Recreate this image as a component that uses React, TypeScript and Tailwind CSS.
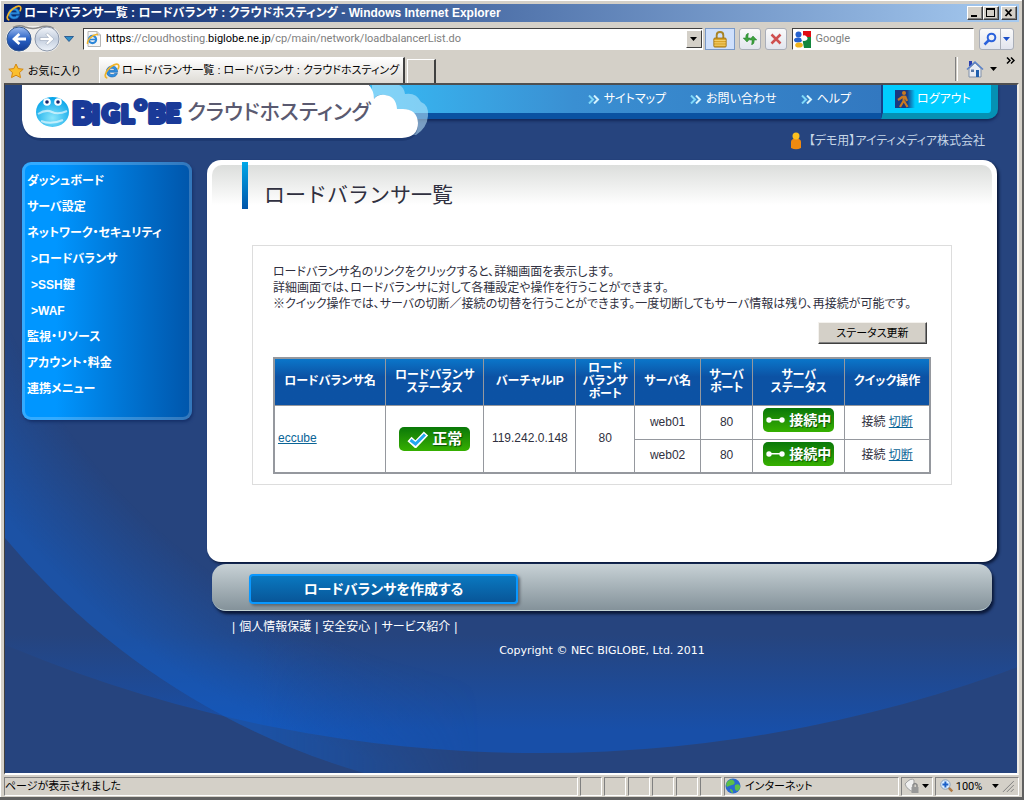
import { ReactNode } from "react";
import { clsx } from "clsx";

type IconProps = { className?: string };

const menuItems = [
  { label: "ダッシュボード" },
  { label: "サーバ設定" },
  { label: "ネットワーク・セキュリティ" },
  { label: ">ロードバランサ", nested: true },
  { label: ">SSH鍵", nested: true },
  { label: ">WAF", nested: true },
  { label: "監視・リソース" },
  { label: "アカウント・料金" },
  { label: "連携メニュー" },
];

const columns = [
  { lines: ["ロードバランサ名"], width: "w-[17%]" },
  { lines: ["ロードバランサ", "ステータス"], width: "w-[15%]" },
  { lines: ["バーチャルIP"], width: "w-[14%]" },
  { lines: ["ロード", "バランサ", "ポート"], width: "w-[9%]" },
  { lines: ["サーバ名"], width: "w-[10%]" },
  { lines: ["サーバ", "ポート"], width: "w-[8%]" },
  { lines: ["サーバ", "ステータス"], width: "w-[14%]" },
  { lines: ["クイック操作"], width: "w-[13%]" },
];

const servers = [
  { name: "web01", port: 80 },
  { name: "web02", port: 80 },
];

function IeIcon({ className }: IconProps) {
  return (
    <svg viewBox="0 0 16 16" className={className} aria-hidden="true">
      <path
        d="M13.6 9.2H5.2c.2 1.6 1.4 2.4 2.9 2.4 1.1 0 2-.4 2.5-1.2h2.8c-.8 2.2-2.8 3.6-5.4 3.6C4.700 14 2.400 11.700 2.400 8.500S4.800 3 8.100 3c3.500 0 5.700 2.500 5.500 6.200ZM5.300 7.300h5.300C10.400 6 9.400 5.300 8 5.300S5.600 6 5.300 7.300Z"
        fill="#2f8fe0"
        stroke="#1461b0"
        strokeWidth=".6"
      />
      <path
        d="M2.600 14.800C.2 13.800 1.200 9.500 4.600 5.800 8 2.200 12.600.3 14.200 1.700c.9.800.7 2.300 0 3.900"
        fill="none"
        stroke="#f0b429"
        strokeWidth="1.700"
        strokeLinecap="round"
      />
    </svg>
  );
}

function Arrow({ className }: IconProps) {
  return (
    <svg viewBox="0 0 8 4" className={clsx("h-1 w-2", className)} aria-hidden="true">
      <path d="M0 0h7L3.500 4Z" fill="currentColor" />
    </svg>
  );
}

function TitleBar() {
  const button =
    "flex h-[14px] w-4 items-center justify-center border border-t-white border-l-white border-r-[#404040] border-b-[#404040] bg-[#d4d0c8] shadow-[inset_-1px_-1px_0_#808080]";
  return (
    <div className="flex h-[18px] items-center bg-linear-to-r from-[#0a246a] to-[#a6caf0] pr-0.5 pl-0.5">
      <IeIcon className="h-4 w-4" />
      <h1 className="ml-0.5 flex-1 truncate text-[12px] leading-[18px] font-bold text-white">
        ロードバランサ一覧 : ロードバランサ : クラウドホスティング - Windows Internet Explorer
      </h1>
      <button type="button" aria-label="最小化" className={button}>
        <svg viewBox="0 0 12 10" className="h-[10px] w-3">
          <path d="M2 7h6v2H2z" />
        </svg>
      </button>
      <button type="button" aria-label="最大化" className={button}>
        <svg viewBox="0 0 12 10" className="h-[10px] w-3">
          <path d="M1 0h9v9H1zM2 2v6h7V2z" fillRule="evenodd" />
        </svg>
      </button>
      <button type="button" aria-label="閉じる" className={clsx(button, "ml-0.5")}>
        <svg viewBox="0 0 12 10" className="h-[10px] w-3">
          <path d="M2.500 1.500l6 6.500m0-6.500l-6 6.500" stroke="#000" strokeWidth="1.800" />
        </svg>
      </button>
    </div>
  );
}

function NavButtons() {
  return (
    <div className="flex items-center">
      <svg viewBox="0 0 56 28" className="h-7 w-14" role="img" aria-label="戻る / 進む">
        <defs>
          <linearGradient id="back" x1="0" y1="0" x2="0" y2="1">
            <stop offset="0" stopColor="#9dbcf0" />
            <stop offset=".5" stopColor="#2a62c4" />
            <stop offset="1" stopColor="#123a94" />
          </linearGradient>
          <linearGradient id="forward" x1="0" y1="0" x2="0" y2="1">
            <stop offset="0" stopColor="#f2f5fa" />
            <stop offset=".5" stopColor="#c3cede" />
            <stop offset="1" stopColor="#eef3fa" />
          </linearGradient>
        </defs>
        <rect x="1" y="1" width="54" height="26" rx="13" fill="#efeeec" />
        <path d="M8 2.500Q14-.5 20 2q7 2.500 14 .5 9-3 15 1" fill="none" stroke="#8a8a8a" strokeWidth="1.500" />
        <circle cx="14" cy="14" r="12" fill="url(#back)" stroke="#34598f" />
        <path d="M7 14l6.500-6 1.800 1.900-2.800 2.600H21v3h-8.500l2.800 2.600-1.800 1.900Z" fill="#fff" />
        <circle cx="42" cy="14" r="12" fill="url(#forward)" stroke="#8e99ab" />
        <path
          d="M49 14l-6.500-6-1.800 1.900 2.800 2.600H35v3h8.500l-2.800 2.600 1.800 1.900Z"
          fill="#fff"
          stroke="#a5b0c2"
          strokeWidth=".7"
        />
      </svg>
      <button type="button" aria-label="履歴" className="ml-0.5 flex h-5 w-3 items-center justify-center">
        <svg viewBox="0 0 10 6" className="h-[6px] w-[10px]">
          <path d="M.5.5h9L5 5.500Z" fill="#2f8fc8" stroke="#1a4a86" strokeWidth=".8" />
        </svg>
      </button>
    </div>
  );
}

function ToolButton({ label, children }: { label: string; children: ReactNode }) {
  return (
    <button
      type="button"
      aria-label={label}
      className="flex h-[22px] w-[22px] items-center justify-center rounded-[3px] border border-[#a9aeb8] bg-linear-to-b from-[#fafafa] via-[#eef0f4] to-[#e2e5ee]"
    >
      {children}
    </button>
  );
}

function AddressBar() {
  return (
    <div className="flex items-center pr-[5px] pl-px">
      <NavButtons />
      <div className="ml-2 flex h-[22px] min-w-0 flex-1 items-center border border-t-[#404040] border-l-[#404040] border-r-white border-b-white bg-white pl-0.5">
        <svg viewBox="0 0 16 16" className="h-4 w-4 shrink-0" aria-hidden="true">
          <path d="M2 .5h9l3.500 3.500v11.500H2Z" fill="#f6f6f6" stroke="#b5b5b5" />
          <path d="M11 .5v3.500h3.500" fill="#ddd" stroke="#b5b5b5" />
          <circle cx="6.500" cy="8.500" r="3.600" fill="none" stroke="#2b86d9" strokeWidth="2.200" />
          <path d="M4 8.500h6" stroke="#2b86d9" strokeWidth="1.600" />
          <path d="M1.500 13C1 9 7 2.500 12 3.500" fill="none" stroke="#f0b429" strokeWidth="1.500" />
        </svg>
        <div
          role="textbox"
          aria-label="アドレス"
          tabIndex={0}
          className="ml-1 min-w-0 flex-1 truncate font-[Roboto,sans-serif] text-[11px] text-[#808080]"
        >
          <span className="text-black">https</span>://cloudhosting.
          <span className="text-black">biglobe.ne.jp</span>
          /cp/main/network/loadbalancerList.do
        </div>
        <button
          type="button"
          aria-label="アドレスの一覧"
          className="flex h-[18px] w-4 items-center justify-center border border-t-white border-l-white border-r-[#404040] border-b-[#404040] bg-[#d4d0c8]"
        >
          <Arrow className="text-black" />
        </button>
      </div>
      <button
        type="button"
        aria-label="セキュリティ"
        className="ml-0.5 flex h-[22px] w-[30px] items-center justify-center border border-[#7a9ac8] bg-[#cfe0fc]"
      >
        <svg viewBox="0 0 14 18" className="h-[17px] w-[14px]">
          <path d="M3.500 8V4.500C3.500 0 10.500 0 10.500 4.500V8" fill="none" stroke="#a88428" strokeWidth="2" />
          <rect x=".5" y="7.500" width="13" height="9.500" rx="1" fill="#dba52a" stroke="#a07414" />
          <path d="M1 10h12M1 12.500h12M1 15h12" stroke="#f5d476" />
        </svg>
      </button>
      <div className="ml-1 flex gap-1">
        <ToolButton label="最新の情報に更新">
          <svg viewBox="0 0 16 14" className="h-[14px] w-4" fill="#3fa33c" stroke="#1f7a2a" strokeWidth=".5">
            <path d="M6.500 1.500C4 1.500 3.800 3.500 3.800 6H1.200L5 10l3.600-4H6c0-2 0-3 .5-4.500Z" />
            <path d="M9.500 12.500c2.500 0 2.700-2 2.700-4.500h2.600L11 4 7.400 8H10c0 2 0 3-.5 4.500Z" />
          </svg>
        </ToolButton>
        <ToolButton label="中止">
          <svg viewBox="0 0 12 12" className="h-3 w-3">
            <path d="M1.500 1.500l9 9m0-9l-9 9" stroke="#cf5050" strokeWidth="2.500" />
          </svg>
        </ToolButton>
      </div>
      <label className="ml-[5px] flex h-[22px] w-[18%] items-center border border-t-[#404040] border-l-[#404040] border-r-white border-b-white bg-white pl-px">
        <svg viewBox="0 0 17 17" className="h-[17px] w-[17px] shrink-0" aria-hidden="true">
          <path d="M0 0h17v17H0Z" fill="#fff" />
          <path d="M9 0h8v6H9Z" fill="#e00b12" />
          <path d="M8 6h9v11h-7Z" fill="#13863c" />
          <circle cx="4.500" cy="3.500" r="3" fill="#2461cf" />
          <ellipse cx="4" cy="9" rx="4" ry="2.500" fill="#2461cf" />
          <ellipse cx="5" cy="14" rx="3.800" ry="2.600" fill="#efb21d" />
          <path d="M8 5q3-2 5 1t-3 4q-4 0-2-5" fill="#fff" />
        </svg>
        <input
          type="search"
          aria-label="検索"
          placeholder="Google"
          className="ml-1 w-full min-w-0 bg-transparent font-[Roboto,sans-serif] text-[11px] outline-none placeholder:text-[#808080]"
        />
      </label>
      <div className="ml-[5px] flex h-[22px] rounded-[3px] border border-[#a9aeb8] bg-linear-to-b from-[#fafafa] to-[#e2e5ee]">
        <button type="button" aria-label="検索する" className="flex w-5 items-center justify-center">
          <svg viewBox="0 0 14 14" className="h-[14px] w-[14px]" fill="none" stroke="#2b62dc">
            <circle cx="8.500" cy="5.500" r="3.800" strokeWidth="2" />
            <path d="M5.500 8.500L1.500 12.500" strokeWidth="2.500" />
          </svg>
        </button>
        <button
          type="button"
          aria-label="検索オプション"
          className="flex w-[13px] items-center justify-center border-l border-[#a9aeb8]"
        >
          <Arrow className="text-[#1c50c8]" />
        </button>
      </div>
    </div>
  );
}

function TabBar() {
  return (
    <div className="flex h-[27px] items-end pr-1 pl-1">
      <button type="button" className="mb-1 flex w-[91px] items-center gap-1 text-[11px]">
        <svg viewBox="0 0 16 16" className="h-4 w-4" aria-hidden="true">
          <path
            d="M8 1l2.200 4.600 5 .6-3.700 3.400 1 5L8 12.200 3.500 14.600l1-5L.8 6.200l5-.6Z"
            fill="#fbbf2d"
            stroke="#d4860f"
            strokeLinejoin="round"
          />
        </svg>
        お気に入り
      </button>
      <button
        type="button"
        className="flex h-[26px] items-center gap-0.5 border-t border-r-2 border-l border-t-white border-r-[#404040] border-l-white bg-linear-to-b from-white to-[#dedbd5] px-1 text-[11px] whitespace-nowrap"
      >
        <IeIcon className="h-4 w-4" />
        ロードバランサ一覧 : ロードバランサ : クラウドホスティング
      </button>
      <button
        type="button"
        aria-label="新しいタブ"
        className="ml-0.5 h-6 w-[29px] border-t border-r-2 border-l border-t-white border-r-[#404040] border-l-white"
      />
      <div className="ml-auto flex h-[26px] items-start">
        <span className="h-6 w-[3px] border-r border-l border-r-white border-l-[#808080]" />
        <button type="button" aria-label="ホーム" className="mt-[3px] ml-2 flex items-center gap-1.5">
          <svg viewBox="0 0 18 18" className="h-[18px] w-[18px]">
            <path d="M3 1h3v5H3Z" fill="#2a3fb0" />
            <path d="M3 8.500L9 3l6 5.500V17H3Z" fill="#e8ecf4" stroke="#8090a8" />
            <path d="M1 9.500L9 2l8 7.500" fill="none" stroke="#5b82c8" strokeWidth="1.600" />
            <path d="M5 9.500h3V12H5Z" fill="#5878a8" />
            <path d="M10 10h3v7h-3Z" fill="#1f5fae" />
          </svg>
          <Arrow className="text-black" />
        </button>
        <button type="button" aria-label="その他" className="ml-2">
          <svg viewBox="0 0 9 7" className="h-[7px] w-[9px]" fill="none" stroke="#000" strokeWidth="1.500">
            <path d="M1 .5l3 3-3 3M5 .5l3 3-3 3" />
          </svg>
        </button>
      </div>
    </div>
  );
}

function Backdrop() {
  return (
    <svg
      viewBox="5 84 1013 690"
      preserveAspectRatio="none"
      className="absolute inset-0 h-full w-full"
      aria-hidden="true"
    >
      <defs>
        <linearGradient id="bowl" gradientUnits="userSpaceOnUse" x1="0" y1="635" x2="0" y2="730">
          <stop offset="0" stopColor="#184fa8" stopOpacity="0" />
          <stop offset="1" stopColor="#184fa8" />
        </linearGradient>
        <radialGradient id="sweep" gradientUnits="userSpaceOnUse" cx="568" cy="72" r="731">
          <stop offset=".84" stopColor="#1260cc" stopOpacity="0" />
          <stop offset=".98" stopColor="#1260cc" stopOpacity=".5" />
        </radialGradient>
        <linearGradient id="fade" gradientUnits="userSpaceOnUse" x1="260" y1="0" x2="480" y2="0">
          <stop offset="0" stopColor="#fff" />
          <stop offset="1" stopColor="#000" />
        </linearGradient>
        <mask id="left" maskUnits="userSpaceOnUse" x="0" y="84" width="1020" height="700">
          <rect x="0" y="84" width="1020" height="700" fill="url(#fade)" />
        </mask>
      </defs>
      <circle cx="540" cy="-617" r="1371" fill="url(#bowl)" />
      <circle cx="568" cy="72" r="731" fill="url(#sweep)" mask="url(#left)" />
    </svg>
  );
}

function Logo() {
  return (
    <div className="relative z-10 h-[58px] w-[408px] shrink-0">
      <svg viewBox="0 0 408 58" className="absolute inset-0 h-full w-full" aria-hidden="true">
        <path d="M350 0h27q5 2 6 9 11-2 16 8 8 3 7 14-1 12-12 19H350Z" fill="#bfe9fb" fillOpacity=".55" />
        <path
          d="M0 2V37q2 18 20 19H380q16-1 16-17-1-14-15-15h-7q-1-14-12-14-7-1-10 4-2-10-6-14H0Z"
          fill="#10295c"
          fillOpacity=".35"
        />
        <path d="M0 0V35q2 18 20 18H380q16-1 16-15-1-14-15-14h-6q-1-13-12-14-7-1-11 4 0-8-5-14Z" fill="#fff" />
      </svg>
      <div className="relative flex h-[54px] items-center pl-[13px]">
        <svg viewBox="0 0 148 40" className="h-10 w-[148px]" role="img" aria-label="BIGLOBE">
          <defs>
            <radialGradient id="globe" cx=".5" cy=".7" r=".65">
              <stop offset="0" stopColor="#8be6fb" />
              <stop offset="1" stopColor="#0aa6ea" />
            </radialGradient>
          </defs>
          <ellipse cx="17.500" cy="20" rx="16.500" ry="15" fill="url(#globe)" />
          <path d="M3 22q8-5 14-2t15-1M6 29q10 4 22-1" fill="none" stroke="#fff" strokeOpacity=".6" strokeWidth="2" />
          <g fill="#fff">
            <circle cx="12" cy="10" r="3.800" />
            <circle cx="23" cy="10" r="3.800" />
          </g>
          <g fill="#16246c">
            <circle cx="12" cy="10" r="1.800" />
            <circle cx="23" cy="10" r="1.800" />
          </g>
          <g
            fill="#1a3a98"
            stroke="#1a3a98"
            strokeWidth="4"
            strokeLinejoin="round"
            fontFamily="Lato, sans-serif"
            fontWeight="900"
          >
            <text x="37" y="32" fontSize="31">B</text>
            <text x="57" y="32" fontSize="26">I</text>
            <text x="67" y="30" fontSize="24">G</text>
            <text x="86" y="31" fontSize="25">L</text>
            <text x="100" y="18" fontSize="14">O</text>
            <text x="113" y="31" fontSize="27">B</text>
            <text x="131" y="30" fontSize="25">E</text>
          </g>
        </svg>
        <span className="ml-1 text-[21px] font-medium whitespace-nowrap text-[#5a5a70]">クラウドホスティング</span>
      </div>
    </div>
  );
}

function Header() {
  const links = ["サイトマップ", "お問い合わせ", "ヘルプ"];
  return (
    <header>
      <div className="flex h-[53px] items-start pr-[19px] pl-[17px]">
        <Logo />
        <nav className="-ml-[60px] flex h-[34px] flex-1 rounded-br-[10px] shadow-[0_2px_3px_#14285a]">
          <ul className="flex flex-1 items-center justify-end gap-6 border-b-[6px] border-[#0a52a2] bg-linear-to-r from-[#36baf4] via-[#3a8fd2] via-40% to-[#3278c0] pr-[30px]">
            {links.map((link) => (
              <li key={link}>
                <a href="#" className="flex items-center gap-1 text-[12px] text-white">
                  <svg viewBox="0 0 12 9" className="h-[9px] w-3" fill="none" strokeWidth="2" aria-hidden="true">
                    <path d="M1 .5l4 4-4 4" stroke="#7fd8f8" />
                    <path d="M6 .5l4 4-4 4" stroke="#d6f3fd" />
                  </svg>
                  {link}
                </a>
              </li>
            ))}
          </ul>
          <a
            href="#"
            className="flex w-[117px] items-center gap-0.5 rounded-br-[10px] border-r-[7px] border-b-[6px] border-l-2 border-r-[#0591b4] border-b-[#0591b4] border-l-[#16408a] bg-[#00ccff] pl-3 text-[12px] text-white"
          >
            <svg viewBox="0 0 20 18" className="h-[18px] w-5" aria-hidden="true">
              <defs>
                <linearGradient id="door">
                  <stop offset=".6" stopColor="#1a3a80" />
                  <stop offset="1" stopColor="#00ccff" />
                </linearGradient>
              </defs>
              <path d="M0 0h20v18H0Z" fill="url(#door)" />
              <circle cx="9" cy="3" r="2" fill="#c87a20" />
              <path
                d="M9 5.500L8.500 11 5 17M9 11l3.500 6M8 6.500L3 10M10 6l2 5"
                fill="none"
                stroke="#c87a20"
                strokeWidth="2.200"
              />
            </svg>
            ログアウト
          </a>
        </nav>
      </div>
      <p className="-mt-2 flex h-[30px] items-center justify-end gap-2 pr-8 pb-2 text-[12px] text-[#c5d5e6]">
        <svg viewBox="0 0 10 18" className="h-[18px] w-[10px]" aria-hidden="true">
          <path d="M0 16V10q0-3.500 5-3.500t5 3.500v6q-5 2.500-10 0" fill="#f08a10" />
          <circle cx="5" cy="4" r="3.500" fill="#fbc01e" />
        </svg>
        【デモ用】アイティメディア株式会社
      </p>
    </header>
  );
}

function SideMenu() {
  return (
    <nav className="min-h-[258px] w-[170px] shrink-0 rounded-[9px] border-[3px] border-white/20 bg-linear-to-r from-[#0096ff] from-20% to-[#0055aa] bg-origin-border shadow-[1px_2px_3px_#15306a]">
      <ul className="pt-[3px] pl-0.5 text-[12px] font-bold text-white">
        {menuItems.map((item) => (
          <li key={item.label} className={clsx("h-[26px] leading-[26px]", item.nested && "pl-1")}>
            <a href="#">{item.label}</a>
          </li>
        ))}
      </ul>
    </nav>
  );
}

function StatusBadge({ children }: { children: ReactNode }) {
  return (
    <span className="mx-auto flex h-6 w-[71px] items-center justify-center gap-[3px] rounded-[5px] bg-linear-to-b from-[#087808] to-[#36b000] text-[14px] leading-6 font-bold text-white [text-shadow:1px_1px_1px_#045004]">
      {children}
    </span>
  );
}

function LoadBalancerTable() {
  const cell = "border border-[#95989e]";
  return (
    <table className="w-full table-fixed border-collapse border-2 border-[#95989e] text-center text-[12px] leading-[13px] text-[#303040]">
      <thead>
        <tr className="h-[47px] bg-linear-to-b from-[#0a78cc] to-[#0c52a4] to-40% text-white">
          {columns.map((column) => (
            <th key={column.lines.join("")} scope="col" className={clsx(cell, column.width, "whitespace-nowrap")}>
              {column.lines.map((line) => (
                <span key={line} className="block">
                  {line}
                </span>
              ))}
            </th>
          ))}
        </tr>
      </thead>
      <tbody>
        {servers.map((server, index) => (
          <tr key={server.name} className="h-[34px]">
            {index === 0 && (
              <>
                <td rowSpan={2} className={clsx(cell, "pl-[3px] text-left")}>
                  <a href="#" className="text-[#0a6496] underline">
                    eccube
                  </a>
                </td>
                <td rowSpan={2} className={cell}>
                  <StatusBadge>
                    <svg viewBox="0 0 22 18" className="h-[18px] w-[22px]" fill="none" aria-hidden="true">
                      <path d="M2.500 9l6 5.500L19 3.500" stroke="#fff" strokeWidth="6" />
                      <path d="M3.500 10l5 4L18 4.500" stroke="#22a8f0" strokeWidth="3" />
                    </svg>
                    <span className="text-[15px]">正常</span>
                  </StatusBadge>
                </td>
                <td rowSpan={2} className={cell}>
                  119.242.0.148
                </td>
                <td rowSpan={2} className={cell}>
                  80
                </td>
              </>
            )}
            <td className={cell}>{server.name}</td>
            <td className={cell}>{server.port}</td>
            <td className={clsx(cell, "pb-1")}>
              <StatusBadge>
                <svg viewBox="0 0 20 6" className="h-[6px] w-5" fill="#fff" aria-hidden="true">
                  <circle cx="3" cy="3" r="2.700" />
                  <circle cx="16" cy="3" r="2.700" />
                  <path d="M3 2h13v1.500H3Z" />
                </svg>
                接続中
              </StatusBadge>
            </td>
            <td className={cell}>
              接続{" "}
              <a href="#" className="text-[#0a6496] underline">
                切断
              </a>
            </td>
          </tr>
        ))}
      </tbody>
    </table>
  );
}

function MainPanel() {
  return (
    <main className="rounded-[14px] bg-white px-[5px] pt-[5px] pb-[77px] shadow-[2px_2px_3px_#0a1838]">
      <div className="flex h-20 items-start rounded-t-[10px] bg-linear-to-b from-[#dcdedc] to-white to-50% pl-[30px]">
        <span className="-mt-[3px] h-[47px] w-[6px] bg-linear-to-b from-[#00a8e8] to-[#0055aa]" />
        <h2 className="ml-4 pt-4 text-[21px] leading-7 text-[#303040] [font-feature-settings:normal]">
          ロードバランサ一覧
        </h2>
      </div>
      <section className="mr-10 ml-10 border border-[#dddddd] px-5 pt-[18px] pb-[10px]">
        <p className="text-[12px] leading-4 text-[#303040]">
          ロードバランサ名のリンクをクリックすると、詳細画面を表示します。
          <br />
          詳細画面では、ロードバランサに対して各種設定や操作を行うことができます。
          <br />
          ※クイック操作では、サーバの切断／接続の切替を行うことができます。一度切断してもサーバ情報は残り、再接続が可能です。
        </p>
        <div className="mt-[10px] mb-[13px] flex justify-end pr-1">
          <button
            type="button"
            className="h-[22px] w-[109px] border border-t-[#f4f2ee] border-l-[#f4f2ee] border-r-[#404040] border-b-[#404040] bg-[#d4d0c8] text-[11px] leading-5 text-black shadow-[inset_-1px_-1px_0_#808080]"
          >
            ステータス更新
          </button>
        </div>
        <LoadBalancerTable />
      </section>
    </main>
  );
}

function PageFooter() {
  const links = ["個人情報保護", "安全安心", "サービス紹介"];
  return (
    <footer className="mt-0.5 pr-[5px] pl-[5px]">
      <div className="flex h-[47px] items-start rounded-[14px] border-b border-[#c4d4d4] bg-linear-to-b from-[#c8d2d6] to-[#84929a] pt-[10px] pl-[37px] shadow-[2px_3px_3px_#0a1838]">
        <button
          type="button"
          className="h-[30px] w-[269px] rounded-[4px] border-2 border-[#0a98ff] bg-linear-to-b from-[#0a78c0] to-[#085698] text-[14px] leading-6 font-bold text-white shadow-[2px_2px_3px_#606870]"
        >
          ロードバランサを作成する
        </button>
      </div>
      <ul className="mt-2 flex h-4 items-center pl-5 text-[12px] text-white">
        <li>|</li>
        {links.map((link) => (
          <li key={link}>
            <a href="#" className="px-1">
              {link}
            </a>
            |
          </li>
        ))}
      </ul>
      <p className="mt-2 text-center font-[DejaVu_Sans,sans-serif] text-[11px] leading-4 text-white">
        Copyright © NEC BIGLOBE, Ltd. 2011
      </p>
    </footer>
  );
}

function StatusBar() {
  const panel = "h-[19px] border border-t-[#808080] border-l-[#808080] border-r-white border-b-white";
  return (
    <div className="flex h-[22px] items-center gap-0.5 text-[11px] leading-[17px] text-black">
      <div className={clsx(panel, "flex-1")}>ページが表示されました</div>
      {[1, 2, 3, 4, 5, 6].map((slot) => (
        <div key={slot} className={clsx(panel, "w-[22px]")} />
      ))}
      <div className={clsx(panel, "flex w-[175px] items-center gap-1")}>
        <svg viewBox="0 0 16 16" className="h-4 w-4" aria-hidden="true">
          <circle cx="8" cy="8" r="7.500" fill="#2a6ad0" />
          <path d="M3 3q4-3 6 0t-2 4-5 2Q0 6 3 3M10 7q4-2 5 1t-3 5q-3-1-2-6M5 11q3 0 3 4-3-1-3-4" fill="#5cc048" />
        </svg>
        インターネット
      </div>
      <button type="button" aria-label="保護モード" className={clsx(panel, "flex w-8 items-center justify-between px-0.5")}>
        <svg viewBox="0 0 16 16" className="h-4 w-4">
          <path d="M1 6q6-7 9-4v12q-7-2-9-8" fill="#f0f0f0" stroke="#a0a0a0" />
          <path d="M9 9V7q2-3 4 0v2" fill="none" stroke="#888" strokeWidth="1.500" />
          <path d="M7.500 9h7v6h-7Z" fill="#989898" />
        </svg>
        <Arrow />
      </button>
      <button type="button" className={clsx(panel, "flex w-[84px] items-center gap-0.5 px-1")}>
        <svg viewBox="0 0 14 14" className="h-[14px] w-[14px]" aria-hidden="true">
          <path d="M8.500 8.500l4 4" stroke="#b07840" strokeWidth="2.500" />
          <circle cx="5.500" cy="5.500" r="4.800" fill="#d8ecff" stroke="#8aa0b8" />
          <path d="M5.500 2.500v6M2.500 5.500h6" stroke="#1a60c8" strokeWidth="2" />
        </svg>
        <span className="font-[Roboto,sans-serif]">100%</span>
        <Arrow className="ml-2" />
        <svg viewBox="0 0 12 12" className="ml-auto h-3 w-3" stroke="#808080" aria-hidden="true">
          <path d="M1 12L12 1M5 12l7-7M9 12l3-3" />
        </svg>
      </button>
    </div>
  );
}

export default function App() {
  return (
    <div className="flex min-h-screen flex-col border-r-2 border-b-[3px] border-[#606060] bg-[#d4d0c8] font-['Liberation_Sans','Noto_Sans_CJK_JP',sans-serif] text-black [font-feature-settings:'palt']">
      <div className="flex flex-1 flex-col border-t border-l border-white px-[3px] pt-[3px]">
        <TitleBar />
        <div className="pt-[3px] pb-[3px]">
          <AddressBar />
        </div>
        <TabBar />
        <div className="relative flex flex-1 flex-col border-t-2 border-r-2 border-b-2 border-l border-t-[#505050] border-r-[#efece6] border-b-white border-l-[#404040] bg-[#26447e]">
          <Backdrop />
          <div className="relative">
            <Header />
            <div className="flex gap-[15px] pr-5 pl-[17px]">
              <div className="pt-0.5">
                <SideMenu />
              </div>
              <div className="min-w-0 flex-1">
                <MainPanel />
                <PageFooter />
              </div>
            </div>
          </div>
        </div>
        <StatusBar />
      </div>
    </div>
  );
}
